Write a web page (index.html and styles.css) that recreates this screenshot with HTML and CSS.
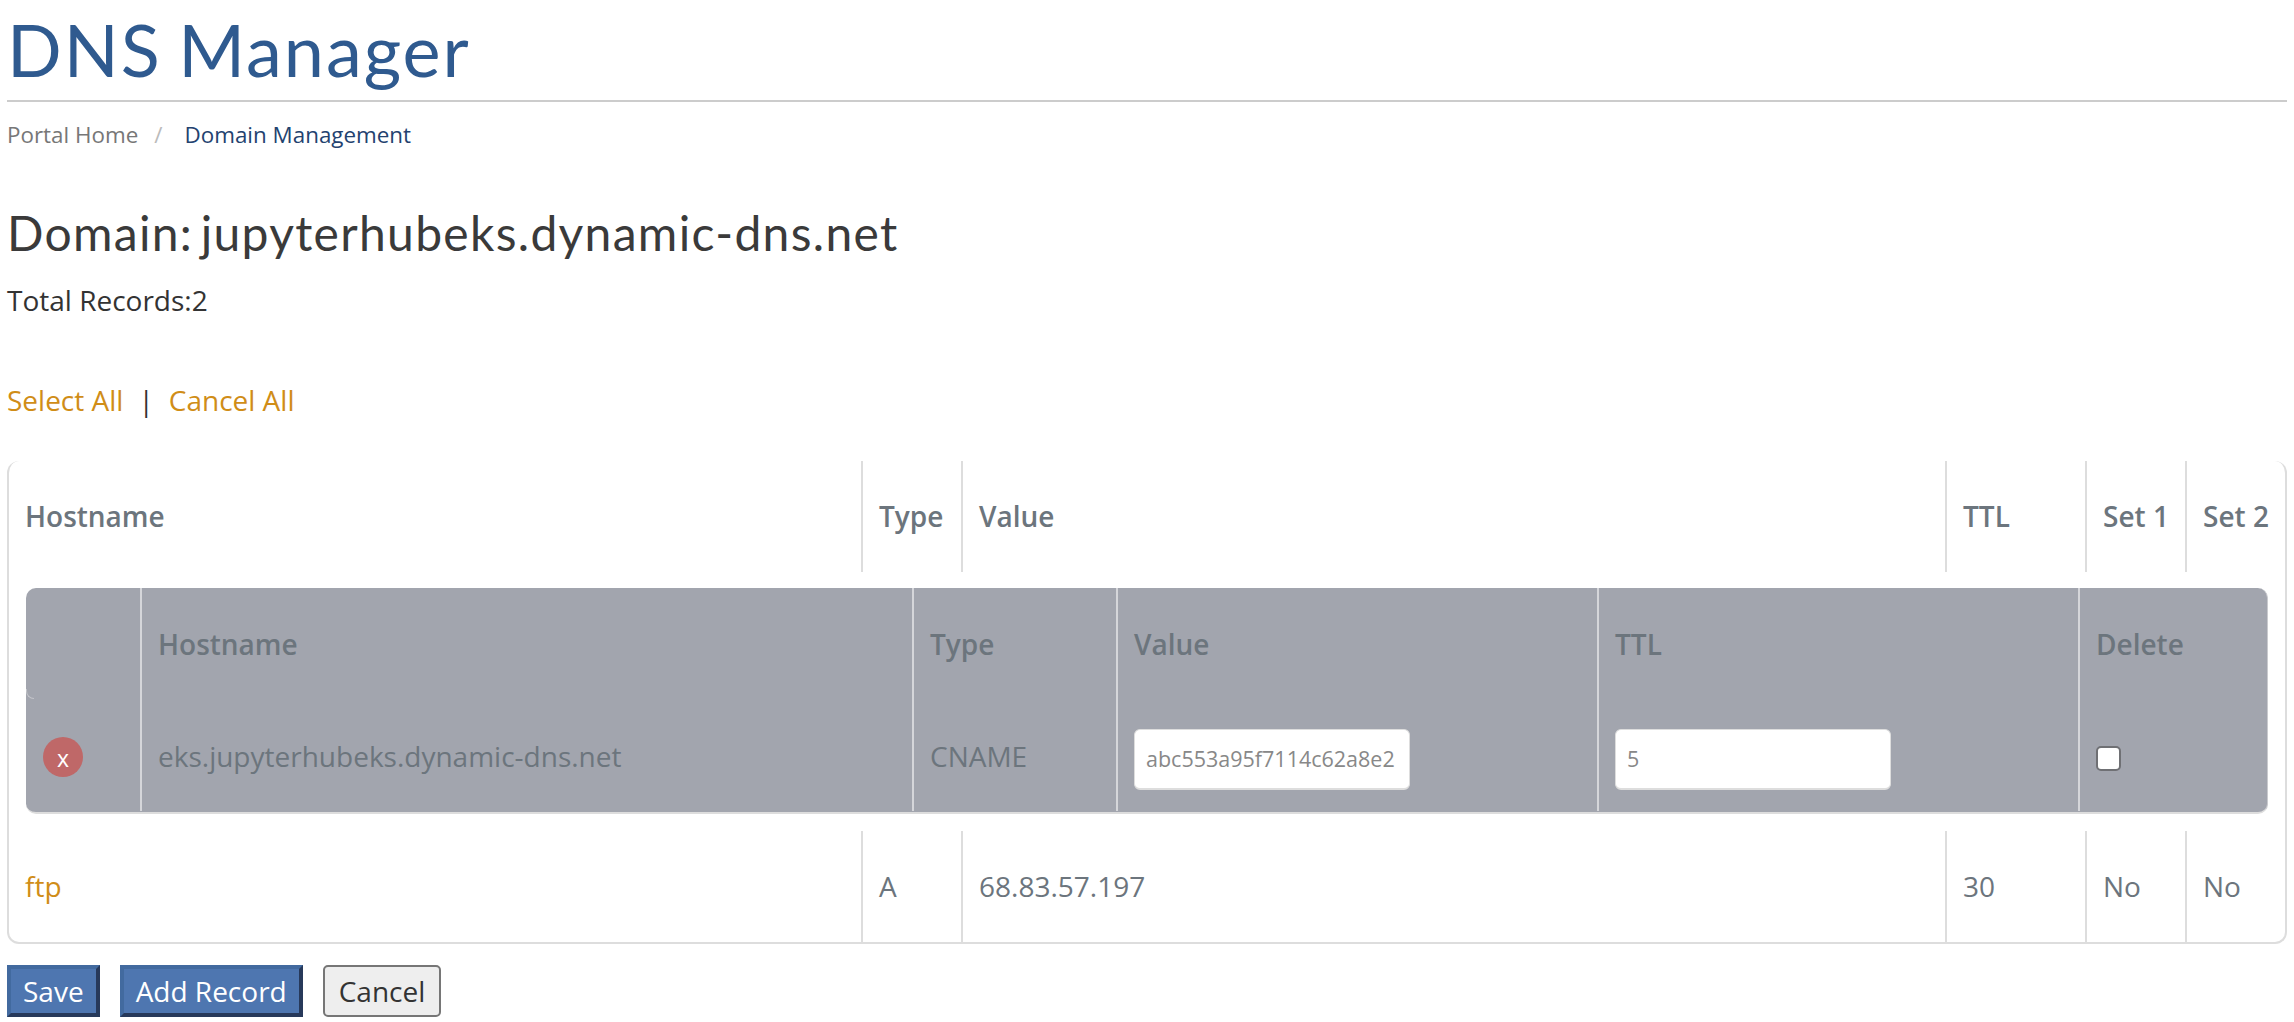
FILE: index.html
```html
<!DOCTYPE html>
<html lang="en">
<head>
<meta charset="utf-8">
<title>DNS Manager</title>
<link rel="stylesheet" href="styles.css">
</head>
<body>
<main class="page">
  <h1 class="title">DNS Manager</h1>
  <nav class="crumbs"><a class="crumb-home">Portal Home</a><span class="crumb-sep">/</span><a class="crumb-now">Domain Management</a></nav>
  <h2 class="domain">Domain: jupyterhubeks.dynamic-dns.net</h2>
  <p class="total">Total Records:2</p>
  <p class="select"><a class="link">Select All</a><span class="pipe">|</span><a class="link">Cancel All</a></p>
  <div class="records">
    <table class="outer">
      <colgroup><col class="c1"><col class="c2"><col class="c3"><col class="c4"><col class="c5"><col class="c6"></colgroup>
      <thead>
        <tr><th>Hostname</th><th>Type</th><th>Value</th><th>TTL</th><th>Set 1</th><th>Set 2</th></tr>
      </thead>
      <tbody>
        <tr class="nested-row"><td colspan="6">
          <div class="nested">
            <span class="notch"></span>
            <table class="inner">
              <colgroup><col class="i1"><col class="i2"><col class="i3"><col class="i4"><col class="i5"><col class="i6"></colgroup>
              <thead><tr><th></th><th>Hostname</th><th>Type</th><th>Value</th><th>TTL</th><th>Delete</th></tr></thead>
              <tbody>
                <tr>
                  <td><span class="remove">x</span></td>
                  <td>eks.jupyterhubeks.dynamic-dns.net</td>
                  <td>CNAME</td>
                  <td><input class="field" type="text" value="abc553a95f7114c62a8e2"></td>
                  <td><input class="field field-ttl" type="text" value="5"></td>
                  <td><input class="check" type="checkbox"></td>
                </tr>
              </tbody>
            </table>
          </div>
        </td></tr>
        <tr class="plain-row"><td><a class="link">ftp</a></td><td>A</td><td>68.83.57.197</td><td>30</td><td>No</td><td>No</td></tr>
      </tbody>
    </table>
  </div>
  <div class="actions">
    <button class="btn btn-primary">Save</button>
    <button class="btn btn-primary">Add Record</button>
    <button class="btn btn-plain">Cancel</button>
  </div>
</main>
</body>
</html>
```
FILE: styles.css
```css
* { box-sizing: border-box; }
html, body { margin: 0; padding: 0; background: #fff; }
body { font-family: "Open Sans", sans-serif; font-size: 28px; color: #333; }
.page { padding: 0 7px; height: 1022px; overflow: hidden; }
.title {
  margin: 0; height: 102px; padding-top: 5px;
  font-family: Lato, sans-serif; font-weight: 400; font-size: 72px; line-height: 88px; letter-spacing: 2px; word-spacing: -4px;
  color: #2f5a8f; border-bottom: 2px solid #ccc;
}
.crumbs { height: 98px; display: flex; align-items: flex-start; padding-top: 17px; font-size: 22.4px; line-height: 32px; }
.crumb-home { color: #777; }
.crumb-sep { color: #bbb; margin: 0 22px 0 16px; }
.crumb-now { color: #23426f; }
.domain {
  margin: 0; height: 66px;
  font-family: Lato, sans-serif; font-weight: 400; font-size: 48px; line-height: 66px; letter-spacing: 1.3px; word-spacing: -6px; color: #3a3a3a;
}
.total { margin: 0; height: 68px; display: flex; align-items: center; color: #333; }
.select { margin: 0; height: 127px; padding-top: 47px; line-height: 38px; }
.link { color: #d08d17; }
.pipe { margin: 0 15px 0 15px; color: #333; }
.records {
  height: 483px; border: 2px solid #ddd; border-top: 0; border-radius: 12px; background: #fff;
}
.outer, .inner { border-collapse: separate; border-spacing: 0; table-layout: fixed; }
.outer { width: 100%; color: #6c757d; }
.c1 { width: 852px; } .c2 { width: 100px; } .c3 { width: 984px; } .c4 { width: 140px; } .c5 { width: 100px; } .c6 { width: auto; }
.outer > thead > tr > th, .plain-row > td {
  text-align: left; padding: 0 16px 2px; border-left: 2px solid #ddd; vertical-align: middle; white-space: nowrap;
}
.outer > thead > tr > th { height: 111px; font-weight: 600; }
.outer > thead > tr > th:first-child, .plain-row > td:first-child { border-left: 0; }
.nested-row > td { height: 259px; padding: 16px 17px 17px 17px; }
.plain-row > td { height: 112px; }
.nested {
  position: relative; height: 226px; background: #a2a5ae; border-radius: 10px;
  border-bottom: 2px solid #ddd; border-right: 1px solid #c9cace;
}
.notch {
  position: absolute; left: 0; top: 101px; width: 8px; height: 10px;
  border-left: 1px solid #c4c5ca; border-bottom: 1px solid #c4c5ca; border-radius: 0 0 0 8px;
}
.inner { width: 100%; color: #6c757d; }
.i1 { width: 114px; } .i2 { width: 772px; } .i3 { width: 204px; } .i4 { width: 481px; } .i5 { width: 481px; } .i6 { width: auto; }
.inner th, .inner td { text-align: left; padding: 0 16px; border-left: 2px solid #d5d6da; white-space: nowrap; }
.inner th:first-child, .inner td:first-child { border-left: 0; }
.inner th { height: 112px; font-weight: 600; vertical-align: middle; }
.inner td { height: 111px; vertical-align: middle; }
.remove {
  display: flex; align-items: center; justify-content: center;
  width: 40px; height: 40px; margin: 3px 0 0 1px; padding-top: 2px; border-radius: 50%;
  background: #bf6868; color: #fff; font-size: 23px; line-height: 1;
}
.field {
  display: block; width: 276px; height: 61px; padding: 0 11px; margin-top: 7px;
  font-family: "Open Sans", sans-serif; font-size: 21.5px; color: #888;
  background: #fff; border: 1px solid #ddd; border-bottom-width: 2px; border-radius: 6px; outline: 0;
}
.check { display: block; width: 25px; height: 25px; margin: 5px 0 0; appearance: none; background: #fff; border: 2px solid #6f7074; border-radius: 5px; }
.actions { display: flex; gap: 20px; margin-top: 21px; }
.btn { height: 52px; font-family: "Open Sans", sans-serif; font-size: 28px; line-height: 1; }
.btn-primary {
  background: #4e76b0; color: #fff; padding: 0 12px;
  border-style: solid; border-width: 4px; border-color: #426a9f #27395a #27395a #426a9f;
}
.btn-plain { background: #eee; color: #333; padding: 0 14px; border: 2px solid #767676; border-radius: 5px; }
```
